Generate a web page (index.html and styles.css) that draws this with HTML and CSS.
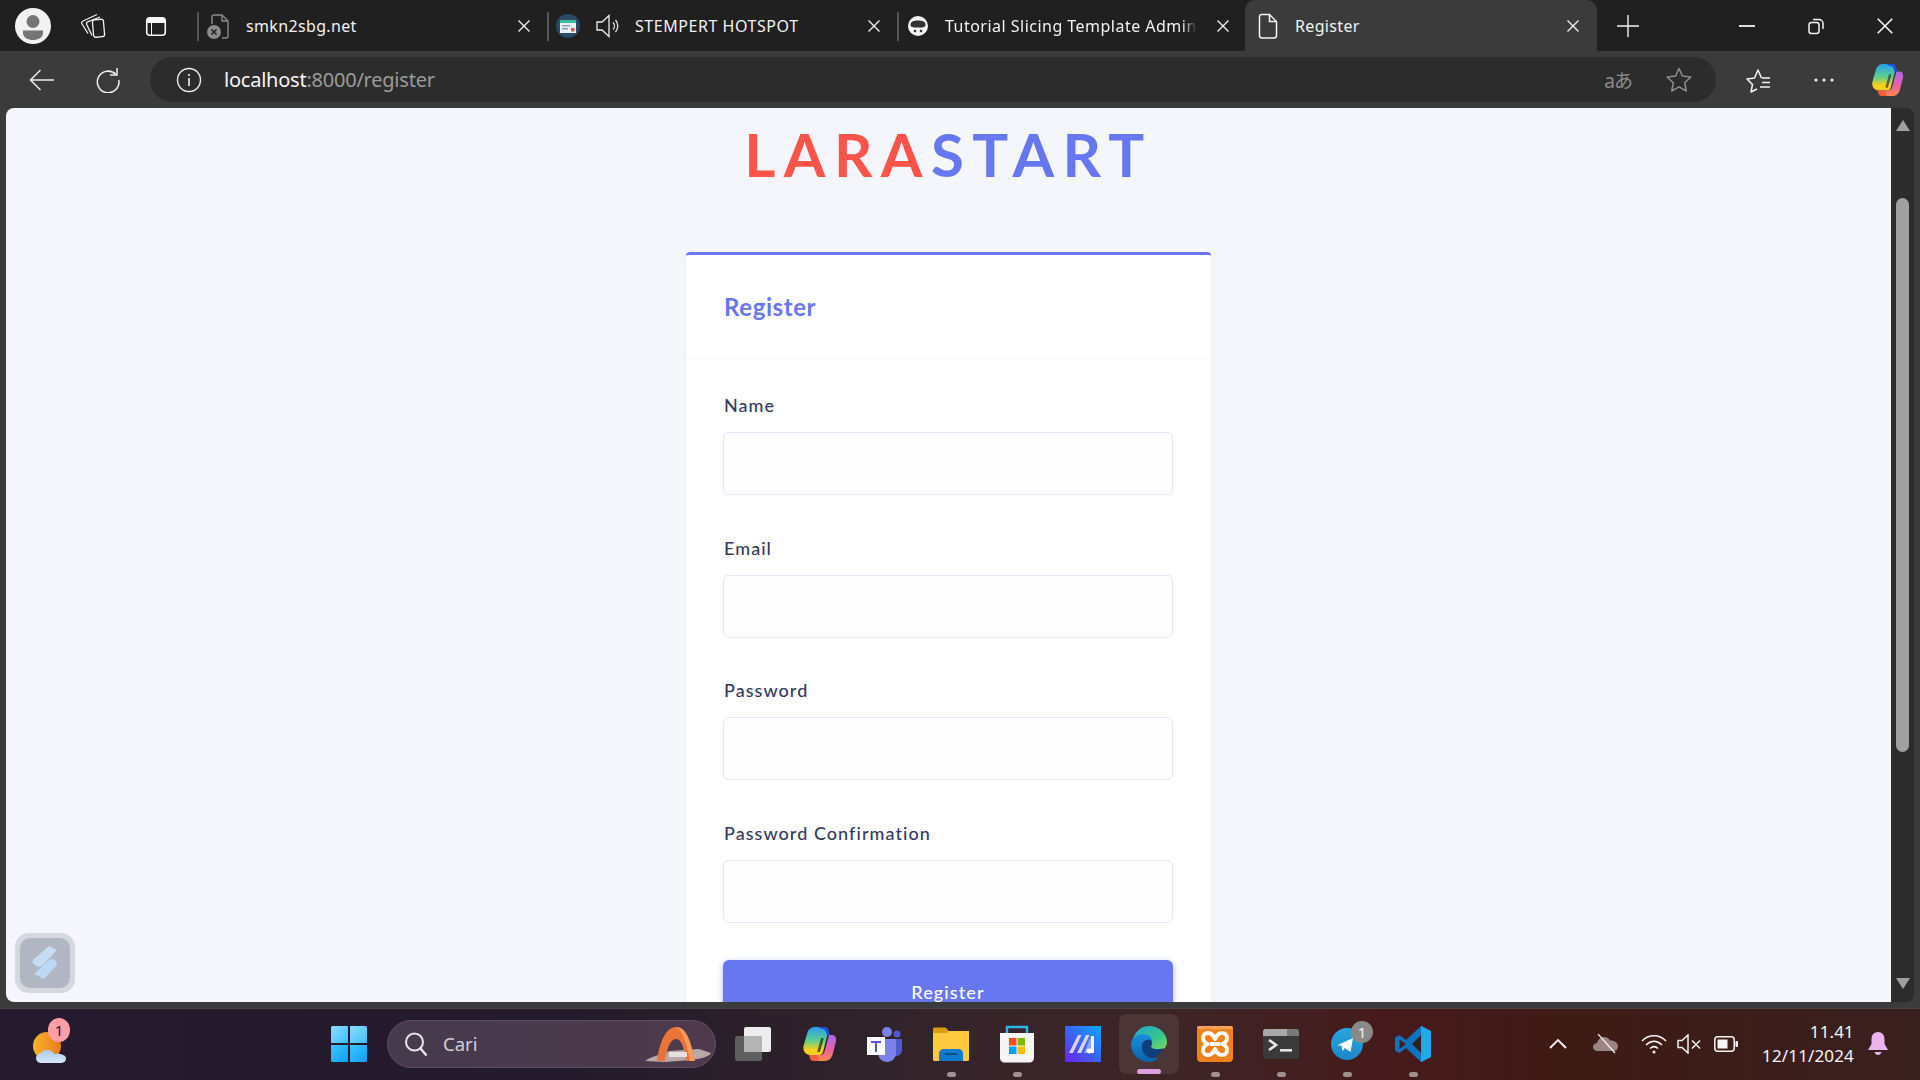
FILE: index.html
```html
<!DOCTYPE html>
<html lang="en">
<head>
<meta charset="utf-8">
<title>Register</title>
<link rel="stylesheet" href="styles.css">
</head>
<body>
<header class="tabstrip">
  <div class="strip-btn profile"><svg width="36" height="36" viewBox="0 0 36 36"><circle cx="18" cy="18" r="18" fill="#f2f2f2"/><circle cx="18" cy="13.5" r="6.5" fill="#757575"/><path d="M8 22.5h20v2.5c0 4.500-5 7-10 7s-10-2.500-10-7z" fill="#757575"/></svg></div>
  <div class="strip-btn collections"><svg width="26" height="26" viewBox="0 0 26 26" fill="none" stroke="#f2f2f2" stroke-width="1.300"><rect x="13" y="6.500" width="11" height="17.500" rx="2.200" transform="rotate(-5 18.500 15)"/><path d="M8 20.500 2 11c-.7-1.100-.4-2.200.6-2.800L17 1.500"/><path d="M12 22.500 6.700 11.500c-.5-1.100-.1-2.100.9-2.600L20 4"/></svg></div>
  <div class="strip-btn vtabs"><svg width="24" height="24" viewBox="0 0 24 24"><rect x="2.750" y="3.750" width="18.500" height="17.500" rx="3" fill="none" stroke="#f5f5f5" stroke-width="1.600"/><path d="M3 7a3 3 0 0 1 3-3h12a3 3 0 0 1 3 3v2H8v12H7V9H3z" fill="#f5f5f5"/></svg></div>
  <div class="tab">
    <svg class="favicon" width="24" height="28" viewBox="0 0 24 28"><path d="M8 3h8l6 6v15a2 2 0 0 1-2 2h-4M8 3a2 2 0 0 0-2 2v7M16 3v6h6" fill="none" stroke="#8a8a8a" stroke-width="1.400"/><circle cx="8" cy="20" r="7" fill="#8a8a8a"/><path d="m5.500 17.500 5 5m0-5-5 5" stroke="#222" stroke-width="1.600"/></svg>
    <span class="tab-title">smkn2sbg.net</span>
    <svg class="tab-close" width="14" height="14" viewBox="0 0 14 14"><path d="m1.500 1.500 11 11m0-11-11 11" stroke="#f0f0f0" stroke-width="1.400"/></svg>
  </div>
  <div class="tab">
    <svg class="favicon" width="24" height="24" viewBox="0 0 24 24"><circle cx="12" cy="12" r="12" fill="#2b4a66"/><rect x="4" y="6" width="16" height="13" fill="#eef3f2"/><rect x="4" y="6" width="16" height="3" fill="#3dbb9f"/><rect x="6" y="11" width="8" height="1.500" fill="#8a9aa8"/><rect x="6" y="14" width="6" height="1.500" fill="#8a9aa8"/><rect x="15" y="14" width="3.500" height="3.500" fill="#e8504e"/></svg>
    <svg class="speaker" width="26" height="26" viewBox="0 0 26 26" fill="none" stroke="#ececec" stroke-width="1.300"><path d="M2 9h5l7-6.500v21L7 17H2z"/><path d="M18 9.500a5 5 0 0 1 0 7M20.500 7a9 9 0 0 1 0 12"/></svg>
    <span class="tab-title tab-wide">STEMPERT HOTSPOT</span>
    <svg class="tab-close" width="14" height="14" viewBox="0 0 14 14"><path d="m1.500 1.500 11 11m0-11-11 11" stroke="#f0f0f0" stroke-width="1.400"/></svg>
  </div>
  <div class="tab tab-narrow">
    <svg class="favicon" width="24" height="24" viewBox="0 0 24 24"><circle cx="12" cy="12" r="10" fill="#f4f4f4"/><path d="M4.500 11c0-3.500 3-4.500 7.500-4.500s7.500 1 7.500 4.500c0 2-2 2.500-7.500 2.500S4.500 13 4.500 11z" fill="#333"/><circle cx="9" cy="17" r="1.300" fill="#333"/><circle cx="15" cy="17" r="1.300" fill="#333"/></svg>
    <span class="tab-title tab-fade">Tutorial Slicing Template Admin Stisla</span>
    <svg class="tab-close" width="14" height="14" viewBox="0 0 14 14"><path d="m1.500 1.500 11 11m0-11-11 11" stroke="#f0f0f0" stroke-width="1.400"/></svg>
  </div>
  <div class="tab tab-active">
    <svg class="favicon" width="24" height="26" viewBox="0 0 24 26" fill="none" stroke="#f2f2f2" stroke-width="1.500"><path d="M5.500 1.500h8l7 7v14a2.500 2.500 0 0 1-2.500 2.500H6a2.500 2.500 0 0 1-2.500-2.500V3.500a2 2 0 0 1 2-2zM13.500 1.500v7h7"/></svg>
    <span class="tab-title">Register</span>
    <svg class="tab-close" width="14" height="14" viewBox="0 0 14 14"><path d="m1.500 1.500 11 11m0-11-11 11" stroke="#f0f0f0" stroke-width="1.400"/></svg>
  </div>
  <div class="strip-btn newtab"><svg width="22" height="22" viewBox="0 0 22 22"><path d="M11 0v22M0 11h22" stroke="#f2f2f2" stroke-width="1.400"/></svg></div>
  <div class="window-controls">
    <div class="win-btn"><svg width="16" height="16" viewBox="0 0 16 16"><path d="M0 8h16" stroke="#f2f2f2" stroke-width="1.800"/></svg></div>
    <div class="win-btn"><svg width="16" height="18" viewBox="0 0 16 18" fill="none" stroke="#f2f2f2" stroke-width="1.500"><rect x="1" y="5.500" width="10" height="11" rx="2.500"/><path d="M5 2.500h6a4 4 0 0 1 4 4V12"/></svg></div>
    <div class="win-btn"><svg width="16" height="16" viewBox="0 0 16 16"><path d="m.7.700 14.600 14.600m0-14.600L.7 15.300" stroke="#f5f5f5" stroke-width="1.600"/></svg></div>
  </div>
</header>

<nav class="toolbar">
  <div class="tool-btn back"><svg width="26" height="22" viewBox="0 0 26 22" fill="none" stroke="#f0f0f0" stroke-width="1.500"><path d="M25 11H2M11.500 1 1.500 11l10 10"/></svg></div>
  <div class="tool-btn reload"><svg width="26" height="26" viewBox="0 0 26 26" fill="none" stroke="#f0f0f0" stroke-width="1.500"><path d="M21 7.500A10.800 10.800 0 1 0 23.800 13"/><path d="M22 1v7h-7"/></svg></div>
  <div class="address">
    <svg class="info" width="26" height="26" viewBox="0 0 26 26"><circle cx="13" cy="13" r="11.500" fill="none" stroke="#f0f0f0" stroke-width="1.400"/><rect x="12.200" y="11" width="1.600" height="8" fill="#f0f0f0"/><circle cx="13" cy="8" r="1.100" fill="#f0f0f0"/></svg>
    <span class="url"><span class="url-host">localhost</span>:8000/register</span>
    <span class="translate">aあ</span>
    <svg class="addr-star" width="26" height="26" viewBox="0 0 26 26" fill="none" stroke="#8c8c8c" stroke-width="1.500" stroke-linejoin="round"><path d="m13 1.500 3.500 7.600 8.300 1-6.100 5.700 1.600 8.200-7.300-4.100-7.300 4.100 1.600-8.200L1.200 10.100l8.300-1z"/></svg>
  </div>
  <div class="tool-btn favorites"><svg width="26" height="26" viewBox="0 0 26 26" fill="none" stroke="#f5f5f5" stroke-width="1.500" stroke-linejoin="round"><path d="M11 22 5 25l1.500-7.500L1 12l7.500-1L12 3l3.500 8"/><path d="M16 11h8M16 15.500h8M14 20h10"/></svg></div>
  <div class="tool-btn dots"><svg width="20" height="4" viewBox="0 0 20 4" fill="#f0f0f0"><circle cx="2" cy="2" r="1.600"/><circle cx="10" cy="2" r="1.600"/><circle cx="18" cy="2" r="1.600"/></svg></div>
  <div class="tool-btn copilot-btn"><svg width="34" height="36" viewBox="0 0 36 36"><defs><linearGradient id="cpA" x1="0" y1="0" x2="0" y2="1"><stop offset="0" stop-color="#2a9df0"/><stop offset=".5" stop-color="#5fd08a"/><stop offset=".8" stop-color="#f5d020"/></linearGradient><linearGradient id="cpB" x1="0" y1="0" x2="0" y2="1"><stop offset="0" stop-color="#a86be8"/><stop offset=".55" stop-color="#e85fa8"/><stop offset="1" stop-color="#f88a4a"/></linearGradient></defs><path d="M14 1h9c2 0 4 1 4.500 3.500L22 26c-.7 2.500-2.500 3-4.500 3H9c-4 0-7.500-4-6.500-9L6 8c1-4.500 4-7 8-7z" fill="url(#cpA)"/><path d="M28 9h3c3 0 4.500 2.500 4 6l-3 12c-1 5-4 8-8 8H14l-2-6h6c3 0 5-1 5.500-3.500z" fill="url(#cpB)"/><path d="M17 1h6c2 0 4 1 5 4l1 4h-3l-1-3c-.5-2-2-3-4-3z" fill="#1a4fd8"/><path d="M8 29h8l2 6h-6c-2 0-3-2-4-6z" fill="#f0603a"/><path d="m21.500 12-4 14" stroke="#1c1c1c" stroke-opacity=".6" stroke-width="2.600"/></svg></div>
</nav>

<div class="viewport">
  <main class="page">
    <div class="brand"><span class="brand-red">LARA</span><span class="brand-blue">START</span></div>
    <section class="card">
      <div class="card-header"><h4 class="card-title">Register</h4></div>
      <form class="card-body">
        <div class="form-group"><label class="form-label">Name</label><input class="form-input" type="text"></div>
        <div class="form-group"><label class="form-label">Email</label><input class="form-input" type="text"></div>
        <div class="form-group"><label class="form-label">Password</label><input class="form-input" type="text"></div>
        <div class="form-group form-group-last"><label class="form-label">Password Confirmation</label><input class="form-input" type="text"></div>
        <button class="submit" type="button">Register</button>
      </form>
    </section>
    <div class="float-btn"><div class="float-inner"><svg width="28" height="36" viewBox="0 0 28 36"><path d="M18 1 26 5 12 20c-1.500 1.500-3 2-5 1.500l-4-2c-1.500-1-2-3-.5-5z" fill="#c5dcf5"/><path d="M18 15c1.500-1.500 4-1.500 6 0s2.500 4 1 6L13 34 3 29z" fill="#bcd8f5"/></svg></div></div>
  </main>
  <aside class="scrollbar">
    <span class="arrow-up"></span>
    <span class="thumb"></span>
    <span class="arrow-down"></span>
  </aside>
</div>

<footer class="taskbar">
  <div class="widget">
    <svg width="36" height="38" viewBox="0 0 36 38"><defs><linearGradient id="sunG" x1="0" y1="0" x2="1" y2="0"><stop offset="0" stop-color="#f6b42a"/><stop offset="1" stop-color="#ee7a1e"/></linearGradient><linearGradient id="cloudG" x1="0" y1="0" x2="0" y2="1"><stop offset="0" stop-color="#a9cdf2"/><stop offset="1" stop-color="#d6e6f8"/></linearGradient></defs><circle cx="15" cy="19" r="14" fill="url(#sunG)"/><path d="M10 36c-3.500 0-6-2-6-5 0-2.500 2-4.500 4.500-4.800C10 24 12.500 23 15 23c3.500 0 6.500 2 7.200 4.500 1-.5 2-.7 3-.7 4.500 0 8.800 1.500 8.800 4.700 0 3-2.500 4.500-5.500 4.500z" fill="url(#cloudG)"/></svg>
    <span class="weather-badge">1</span>
  </div>
  <div class="start"><svg width="36" height="36" viewBox="0 0 36 36"><defs><linearGradient id="winA" x1="0" y1="0" x2="1" y2="1"><stop offset="0" stop-color="#8fdcff"/><stop offset="1" stop-color="#3cc0ff"/></linearGradient><linearGradient id="winB" x1="0" y1="0" x2="1" y2="1"><stop offset="0" stop-color="#3fc4ff"/><stop offset="1" stop-color="#109cf8"/></linearGradient></defs><path d="M1.500 0H17v17H0V1.500A1.500 1.500 0 0 1 1.500 0z" fill="url(#winA)"/><path d="M19 0h15.500A1.500 1.500 0 0 1 36 1.500V17H19z" fill="url(#winA)"/><path d="M0 19h17v17H1.500A1.500 1.500 0 0 1 0 34.500z" fill="url(#winB)"/><path d="M19 19h17v15.500a1.500 1.500 0 0 1-1.500 1.500H19z" fill="url(#winB)"/></svg></div>
  <div class="search">
    <svg class="search-icon" width="24" height="26" viewBox="0 0 24 26" fill="none" stroke="#e8e4e8" stroke-width="2"><circle cx="10.500" cy="11" r="8.500"/><path d="m16.500 17.500 6 7" stroke-width="2.400"/></svg>
    <span class="search-text">Cari</span>
    <svg class="search-art" width="66" height="38" viewBox="0 0 66 38"><path d="M0 36c8-6 18-6 24-10l30-2 12 4c-2 4-12 6-20 7L20 37z" fill="#b8a8a8"/><path d="M12 36C14 20 20 2 31 2s15 16 19 34h-9c-2-12-4-22-10-22s-9 10-11 22z" fill="#e8743a"/><path d="M31 2c11 0 15 16 19 34h-5C42 20 38 6 31 2z" fill="#f59a5c"/><path d="M24 27h18v5H24z" fill="#e8e0e0"/></svg>
  </div>
  <div class="tasks">
    <div class="task"><svg width="36" height="36" viewBox="0 0 36 36"><rect x="9" y="1" width="27" height="25" rx="2" fill="#ededed"/><rect x="0" y="10" width="27" height="25" rx="2" fill="#5e5e5e"/><rect x="9" y="10" width="18" height="16" fill="#b4b4b4"/></svg></div>
    <div class="task"><svg width="36" height="36" viewBox="0 0 36 36"><path d="M14 1h9c2 0 4 1 4.500 3.500L22 26c-.7 2.500-2.500 3-4.500 3H9c-4 0-7.500-4-6.500-9L6 8c1-4.500 4-7 8-7z" fill="url(#cpA)"/><path d="M28 9h3c3 0 4.500 2.500 4 6l-3 12c-1 5-4 8-8 8H14l-2-6h6c3 0 5-1 5.500-3.500z" fill="url(#cpB)"/><path d="M17 1h6c2 0 4 1 5 4l1 4h-3l-1-3c-.5-2-2-3-4-3z" fill="#1a4fd8"/><path d="M8 29h8l2 6h-6c-2 0-3-2-4-6z" fill="#f0603a"/><path d="m21.500 12-4 14" stroke="#1c1c1c" stroke-opacity=".7" stroke-width="2.600"/></svg></div>
    <div class="task"><svg width="36" height="36" viewBox="0 0 36 36"><circle cx="20" cy="6" r="5" fill="#7b83eb"/><circle cx="30" cy="8" r="3.500" fill="#5059c9"/><path d="M25 13h10v10c0 4-2 7-6 7l-4-1z" fill="#5059c9"/><path d="M11 13h18v14c0 5-4 9-9 9s-9-4-9-9z" fill="#7b83eb"/><rect x="0" y="11" width="18" height="18" fill="#fff"/><path d="M4 15h10v2h-4v9H8v-9H4z" fill="#5059c9"/></svg></div>
    <div class="task has-dot"><svg width="36" height="34" viewBox="0 0 36 34"><path d="M0 2a1.500 1.500 0 0 1 1.500-1.500h11L16 4h20v10H0z" fill="#d99e0c"/><path d="M0 6h14l2-2h20v28.500a1.500 1.500 0 0 1-1.500 1.500h-33A1.500 1.500 0 0 1 0 32.500z" fill="#fcc93f"/><path d="M6 34V27c0-3 2-5 5-5h14c3 0 5 2 5 5v7z" fill="#0f79d0"/><rect x="12" y="26" width="12" height="2" fill="#0a4d86"/></svg></div>
    <div class="task has-dot"><svg width="36" height="38" viewBox="0 0 36 38"><path d="M8 9V2h20v7" fill="none" stroke="#29b6e8" stroke-width="2.400"/><path d="M1 8h34v25c0 2.500-2 4.500-4.500 4.500h-25C3 37.500 1 35.500 1 33z" fill="#f5f5f5"/><rect x="10" y="13" width="7.500" height="7.500" fill="#f25022"/><rect x="18.500" y="13" width="7.500" height="7.500" fill="#7fba00"/><rect x="10" y="21.500" width="7.500" height="7.500" fill="#00a4ef"/><rect x="18.500" y="21.500" width="7.500" height="7.500" fill="#ffb900"/></svg></div>
    <div class="task"><svg width="36" height="36" viewBox="0 0 36 36"><defs><linearGradient id="maG" x1="0" y1="1" x2="1" y2="0"><stop offset="0" stop-color="#6a22f5"/><stop offset="1" stop-color="#0aa8fb"/></linearGradient></defs><rect width="36" height="36" fill="url(#maG)"/><path d="M4 27 13 9h3.500L8 27zM12 27 21 9h3.500L16 27z" fill="#d6d4f5"/><path d="M26 10h3v17h-3z" fill="#f4f4ff"/><path d="m19 27 7-17v17z" fill="#8fa4fb"/><circle cx="24" cy="25" r="2.400" fill="#fff"/></svg></div>
    <div class="task task-current"><svg width="36" height="36" viewBox="0 0 36 36"><defs><linearGradient id="edgeA" x1="0" y1="0" x2="1" y2="1"><stop offset="0" stop-color="#1ca7d8"/><stop offset=".6" stop-color="#39c48f"/><stop offset="1" stop-color="#7bdc5a"/></linearGradient><linearGradient id="edgeB" x1="0" y1="0" x2="0" y2="1"><stop offset="0" stop-color="#1a90dc"/><stop offset="1" stop-color="#0d5fa8"/></linearGradient></defs><path d="M18 0c10 0 18 7.500 18 16 0 5-3.500 8-8 8-4.500 0-8-1-8-3 0-1 1-1.500 1-3.500 0-3.500-3-6-7-6-6 0-13 4-14 10C1 9 8 0 18 0z" fill="url(#edgeA)"/><path d="M0 19C0 12 6 8 12 8c5 0 9 3 9 7-5-3-10 0-10 6 0 6 5 11 11 11 3 0 5-.5 7-2-3 4-7 6-11 6C8 36 0 28 0 19z" fill="url(#edgeB)"/><path d="M11 21c0-5 4-8 8-7 2 .5 2 2 1 4-1 2 0 3.500 2 4.500 3 1 7 1 10-.5-2 5-6 8-10 10-6 0-11-5-11-11z" fill="#0c3f7e"/></svg></div>
    <div class="task has-dot"><svg width="36" height="36" viewBox="0 0 36 36"><rect width="36" height="36" rx="4" fill="#f3801f"/><rect x="0" y="0" width="36" height="3" rx="1.500" fill="#f7a35c"/><path d="M18 13C16 8 13 7 11 7 8 7 6 9 6 12c0 3 2 5 5 6-3 1-5 3-5 6s2 5 5 5c2 0 5-1 7-6 2 5 5 6 7 6 3 0 5-2 5-5s-2-5-5-6c3-1 5-3 5-6s-2-5-5-5c-2 0-5 1-7 6zM13 18h10" fill="none" stroke="#fff" stroke-width="3.800" stroke-linejoin="round"/></svg></div>
    <div class="task has-dot"><svg width="36" height="36" viewBox="0 0 36 36"><rect width="36" height="30" y="3" rx="3" fill="#3a3a3a"/><path d="M3 3h30a3 3 0 0 1 3 3v4H0V6a3 3 0 0 1 3-3z" fill="#7a7a7a"/><path d="M0 6a3 3 0 0 1 3-3h21v7H0z" fill="#a8a8a8"/><path d="m6 14 7 5-7 5" fill="none" stroke="#e6e6e6" stroke-width="2.600"/><rect x="17" y="23" width="12" height="2.600" fill="#e6e6e6"/></svg></div>
    <div class="task has-dot"><svg class="tg-icon" width="36" height="36" viewBox="0 0 36 36"><defs><linearGradient id="tgG" x1="0" y1="0" x2="0" y2="1"><stop offset="0" stop-color="#2aa6e0"/><stop offset="1" stop-color="#1a88c8"/></linearGradient></defs><circle cx="18" cy="18" r="16" fill="url(#tgG)"/><path d="M8 19.500 24 12l-2.500 14-5.500-4-2.500 3-1-5.500z" fill="#fff"/><circle cx="33" cy="6" r="11" fill="#8a8a8a"/><text class="tg-count" x="33" y="11.500">1</text></svg></div>
    <div class="task has-dot"><svg width="36" height="36" viewBox="0 0 36 36"><path d="M26 0 36 5v26l-10 5-15-14-6.500 5L0 24.500V11.500L4.500 9l6.500 5z" fill="#0f74bc"/><path d="M26 0 36 5v26l-10 5z" fill="#25a7ee"/><path d="m26 9-9 9 9 9z" fill="#2f2022"/><path d="M4.500 13.500 11 18l-6.500 5z" fill="#3f1f20"/></svg></div>
  </div>
  <div class="tray">
    <div class="tray-item tray-wide"><svg width="18" height="10" viewBox="0 0 18 10" fill="none" stroke="#f5f5f5" stroke-width="1.800"><path d="m1 9 8-8 8 8"/></svg></div>
    <div class="tray-item tray-wide"><svg width="26" height="20" viewBox="0 0 26 20"><path d="M5 17c-3 0-5-1.500-5-4 0-2 1.500-3.500 4-4 1-3.500 4-6 7-6 3 0 5 1.500 6 3.500 4-.5 8 2 8 6 0 3-2 4.500-5 4.500z" fill="#9a8585"/><path d="m5 0 17 19" stroke="#f5f5f5" stroke-width="1.200"/></svg></div>
    <div class="tray-item tray-wide"><svg width="26" height="20" viewBox="0 0 26 20" fill="none" stroke="#f5f5f5" stroke-width="1.500"><path d="M1 7c7-7 17-7 24 0M5 11c5-5 11-5 16 0M9 14.500c2.500-2.500 5.500-2.500 8 0"/><circle cx="13" cy="18" r="1.500" fill="#f5f5f5" stroke="none"/></svg></div>
    <div class="tray-item tray-vol"><svg width="24" height="20" viewBox="0 0 24 20" fill="none" stroke="#f5f5f5" stroke-width="1.500"><path d="M1 6.500h4L11 1v18l-6-5.500H1z"/><path d="m15 6.500 8 8m0-8-8 8"/></svg></div>
    <div class="tray-item tray-batt"><svg width="24" height="16" viewBox="0 0 24 16"><rect x=".8" y=".8" width="19.400" height="14.400" rx="3" fill="none" stroke="#f5f5f5" stroke-width="1.500"/><rect x="3.500" y="3.500" width="10" height="9" fill="#f5f5f5"/><rect x="21.500" y="5" width="2.500" height="6" rx="1" fill="#f5f5f5"/></svg></div>
    <div class="clock"><span>11.41</span><span>12/11/2024</span></div>
    <div class="tray-item tray-wide"><svg width="20" height="24" viewBox="0 0 20 24" fill="#ecb4ee"><path d="M10 0c4 0 6.500 3 6.500 7v5l3.500 6H0l3.500-6V7C3.500 3 6 0 10 0z"/><path d="M6.500 20h7c-.5 2-2 3-3.500 3s-3-1-3.500-3z"/></svg></div>
  </div>
</footer>
</body>
</html>
```
FILE: styles.css
```css
* { box-sizing: border-box; }
html, body { margin: 0; height: 100%; }
body {
  width: 1920px;
  height: 1080px;
  overflow: hidden;
  display: flex;
  flex-direction: column;
  background: #3b3b3b;
  font-family: "Noto Sans", sans-serif;
}
svg { display: block; flex: none; }

/* browser tab strip */
.tabstrip { height: 51px; flex: none; display: flex; background: #202020; }
.strip-btn { height: 51px; display: flex; align-items: center; justify-content: center; flex: none; }
.profile { width: 66px; }
.collections { width: 54px; }
.vtabs { width: 54px; margin-left: 9px; margin-right: 14px; }
.tab {
  position: relative;
  width: 350px;
  height: 51px;
  flex: none;
  display: flex;
  align-items: center;
  padding: 0 16px 0 9px;
  color: #f2f2f2;
}
.tab::before {
  content: "";
  position: absolute;
  left: 0;
  top: 12px;
  width: 2px;
  height: 29px;
  background: #555;
}
.tab-narrow { width: 348px; padding-right: 15px; }
.tab-active {
  width: 352px;
  padding: 0 17px 0 11px;
  background: #3b3b3b;
  border-radius: 10px 10px 0 0;
}
.tab-active::before { display: none; }
.tab-title {
  margin-left: 16px;
  font-size: 16px;
  white-space: nowrap;
  letter-spacing: .35px;
}
.tab-active .tab-title { margin-left: 15px; }
.speaker { margin-left: 15px; }
.speaker + .tab-title { margin-left: 14px; }
.tab-wide { letter-spacing: .55px; }
.tab-fade {
  width: 252px;
  margin-left: 15px;
  overflow: hidden;
  letter-spacing: .48px;
  -webkit-mask-image: linear-gradient(90deg, #000 94%, transparent 100%);
  mask-image: linear-gradient(90deg, #000 94%, transparent 100%);
}
.tab-close { margin-left: auto; }
.newtab { width: 22px; margin-left: 20px; }
.window-controls { display: flex; margin-left: auto; padding-right: 1px; }
.win-btn { width: 69px; height: 51px; display: flex; align-items: center; justify-content: center; }

/* toolbar */
.toolbar { height: 57px; flex: none; display: flex; align-items: flex-start; padding: 6px 0 0 15px; background: #3b3b3b; }
.tool-btn { width: 54px; height: 45px; flex: none; display: flex; align-items: center; justify-content: center; }
.reload { margin-left: 12px; }
.address {
  width: 1566px;
  height: 45px;
  margin-left: 15px;
  flex: none;
  display: flex;
  align-items: center;
  padding-left: 26px;
  background: #2c2c2c;
  border-radius: 23px;
}
.url { margin-left: 22px; font-size: 20px; letter-spacing: -0.23px; color: #9b9b9b; }
.url-host { color: #f5f5f5; }
.translate { margin-left: auto; font-size: 19px; color: #8c8c8c; letter-spacing: -1px; font-family: "Noto Sans", "Noto Sans CJK JP", sans-serif; }
.addr-star { margin-left: 34px; margin-right: 24px; }
.favorites { margin-left: 16px; }
.dots { margin-left: 11px; }
.copilot-btn { margin-left: 9px; }

/* viewport */
.viewport { height: 894px; flex: none; display: flex; padding: 0 6px; background: #3b3b3b; }
.page {
  position: relative;
  width: 1885px;
  flex: none;
  overflow: hidden;
  background: #f4f6fb;
  border-radius: 8px 0 0 8px;
}
.brand {
  height: 93px;
  margin-bottom: 51px;
  text-align: center;
  font-family: "Lato", sans-serif;
  font-size: 60px;
  font-weight: 700;
  line-height: 93px;
  letter-spacing: 8.400px;
}
.brand-red { color: #fc544b; }
.brand-blue { color: #6777ef; }
.card {
  width: 525px;
  margin: 0 auto;
  background: #fff;
  border-top: 3px solid #6777ef;
  border-radius: 4px;
  box-shadow: 0 4px 10px rgba(0, 0, 0, .03);
}
.card-header { height: 105px; padding: 0 38px 2px; display: flex; align-items: center; border-bottom: 1px solid #f9f9f9; }
.card-title { margin: 0; font-family: "Lato", sans-serif; font-size: 24px; font-weight: 700; letter-spacing: .6px; color: #6777ef; }
.card-body { display: flex; flex-direction: column; padding: 33px 38px 0 37px; }
.form-group { display: flex; flex-direction: column; margin-bottom: 40.670px; }
.form-group-last { margin-bottom: 37px; }
.form-label {
  height: 25px;
  margin-bottom: 14px;
  padding-left: 1px;
  font-family: "Lato", sans-serif;
  font-size: 18px;
  font-weight: 500;
  line-height: 25px;
  letter-spacing: 1.050px;
  color: #34395e;
}
.form-input {
  width: 450px;
  height: 63px;
  padding: 0 19px;
  background: #fdfdff;
  border: 1px solid #e4e6fc;
  border-radius: 5px;
}
.submit {
  width: 450px;
  height: 64px;
  flex: none;
  background: #6777ef;
  border: 0;
  border-radius: 6px;
  box-shadow: 0 2px 6px #acb5f6;
  color: #fff;
  font-family: "Lato", sans-serif;
  font-size: 18px;
  font-weight: 500;
  letter-spacing: 1.100px;
}
.float-btn {
  position: absolute;
  left: 9px;
  bottom: 9px;
  width: 60px;
  height: 60px;
  padding: 5px;
  background: #d5d8de;
  border-radius: 14px;
}
.float-inner {
  width: 50px;
  height: 50px;
  display: flex;
  align-items: center;
  justify-content: center;
  background: #b0b7c2;
  border-radius: 10px;
}

/* scrollbar */
.scrollbar {
  width: 23px;
  flex: none;
  display: flex;
  flex-direction: column;
  align-items: center;
  padding: 12px 0 13px;
  background: #2c2c2c;
  border-radius: 0 8px 8px 0;
}
.arrow-up { width: 0; height: 0; border: solid transparent; border-width: 0 7.500px 11px; border-bottom-color: #a0a0a0; }
.arrow-down { width: 0; height: 0; margin-top: auto; border: solid transparent; border-width: 11px 7.500px 0; border-top-color: #a0a0a0; }
.thumb { width: 13px; height: 554px; margin-top: 67px; background: #a0a0a0; border-radius: 7px; }

/* taskbar */
.taskbar {
  height: 72px;
  margin-top: 6px;
  padding-bottom: 2px;
  flex: none;
  display: flex;
  align-items: center;
  background: linear-gradient(90deg, #241c2e 0%, #231b2b 30%, #33242a 48%, #3e2426 62%, #461a1c 72%, #3f1b15 82%, #38201f 100%);
  border-top: 1px solid #4a4243;
}
.widget { position: relative; width: 100px; height: 69px; flex: none; display: flex; align-items: center; padding: 4px 0 0 32px; }
.weather-badge {
  position: absolute;
  left: 48px;
  top: 9px;
  width: 22px;
  height: 24px;
  border-radius: 50%;
  background: #ff9ea8;
  color: #2a1a20;
  font-size: 15px;
  line-height: 24px;
  text-align: center;
}
.start { width: 66px; margin-left: 216px; flex: none; display: flex; justify-content: center; }
.search {
  width: 329px;
  height: 48px;
  margin-left: 5px;
  flex: none;
  display: flex;
  align-items: center;
  padding-left: 16px;
  background: linear-gradient(90deg, #463a4d, #4e3a4c);
  border: 1px solid #5d5060;
  border-radius: 24px;
}
.search-text { margin-left: 15px; font-size: 18.500px; color: #d4d0d4; }
.search-art { margin-left: auto; margin-right: 4px; }
.tasks { display: flex; margin-left: 4px; flex: none; }
.task { position: relative; width: 66px; height: 60px; display: flex; align-items: center; justify-content: center; }
.has-dot::after {
  content: "";
  position: absolute;
  left: 29px;
  bottom: -3px;
  width: 9px;
  height: 5px;
  border-radius: 3px;
  background: #a09090;
}
.task-current { width: 60px; margin: 0 3px; background: rgba(255, 255, 255, .08); border-radius: 8px; }
.task-current::after {
  content: "";
  position: absolute;
  left: 18px;
  bottom: 0;
  width: 24px;
  height: 5px;
  border-radius: 3px;
  background: #dca0e0;
}
.tg-icon { overflow: visible; }
.tg-count { fill: #f2f2f2; font-size: 15px; text-anchor: middle; font-family: "Noto Sans", sans-serif; }
.tray { margin-left: auto; flex: none; display: flex; align-items: center; padding-right: 18px; }
.tray-item { height: 40px; display: flex; align-items: center; justify-content: center; flex: none; }
.tray-wide { width: 48px; }
.tray-vol { width: 22px; }
.tray-batt { width: 52px; }
.clock { width: 103px; display: flex; flex-direction: column; align-items: flex-end; gap: 3px; margin-left: -1px; color: #f5f5f5; font-size: 17px; line-height: 21px; letter-spacing: .15px; }
```
